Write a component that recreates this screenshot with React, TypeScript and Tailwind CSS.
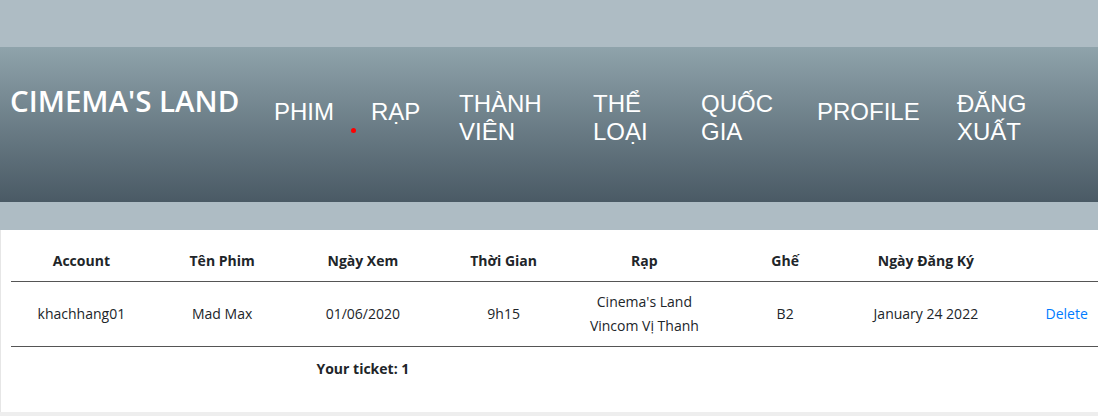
import React from "react";

const headers = ["Account", "Tên Phim", "Ngày Xem", "Thời Gian", "Rạp", "Ghế", "Ngày Đăng Ký", ""];

export default function App() {
  return (
    <div className="w-[1098px] h-[416px] overflow-hidden bg-[#eeeeee]">
      <div className="h-[47px] bg-[#aebcc4]" />
      <header className="relative h-[155px] bg-linear-to-b from-[#8fa3ab] to-[#4a5a65] flex items-start text-white">
        <div className="w-[274px] shrink-0 pl-[10px] mt-[35px] text-[29.5px] leading-[38px] font-semibold whitespace-nowrap [font-family:'Open_Sans',sans-serif]">
          CIMEMA'S LAND
        </div>
        <nav className="flex items-start text-[24px] leading-[28px] [font-family:'Liberation_Sans',Arial,sans-serif]">
          <div className="w-[97px] mt-[51px]">PHIM</div>
          <div className="w-[88px] mt-[51px]">RẠP</div>
          <div className="w-[134px] mt-[43px]"><div className="w-[90px]">THÀNH VIÊN</div></div>
          <div className="w-[108px] mt-[43px]"><div className="w-[60px]">THỂ LOẠI</div></div>
          <div className="w-[116px] mt-[43px]"><div className="w-[80px]">QUỐC GIA</div></div>
          <div className="w-[140px] mt-[51px]">PROFILE</div>
          <div className="w-[120px] mt-[43px]"><div className="w-[80px]">ĐĂNG XUẤT</div></div>
        </nav>
        <span className="absolute left-[351px] top-[81px] w-[5px] h-[5px] rounded-full bg-[#ff0000]" />
      </header>
      <div className="h-[28px] bg-[#aebcc4]" />
      <section className="h-[182px] bg-white border-l border-[#e6e6e6] text-[14px] text-[#212529] [font-family:'Open_Sans',sans-serif]">
        <div className="ml-[10px] w-[1126px]">
          <div className="grid grid-cols-8 h-[52px] pt-[21px] border-b border-[#555555] font-bold leading-[20px]">
            {headers.map((h, i) => (
              <div key={i} className="flex justify-center whitespace-nowrap">{h}</div>
            ))}
          </div>
          <div className="grid grid-cols-8 h-[65px] items-center border-b border-[#555555] leading-6">
            <div className="flex justify-center whitespace-nowrap">khachhang01</div>
            <div className="flex justify-center whitespace-nowrap">Mad Max</div>
            <div className="flex justify-center whitespace-nowrap">01/06/2020</div>
            <div className="flex justify-center whitespace-nowrap">9h15</div>
            <div className="flex flex-col items-center whitespace-nowrap">
              <span>Cinema's Land</span>
              <span>Vincom Vị Thanh</span>
            </div>
            <div className="flex justify-center whitespace-nowrap">B2</div>
            <div className="flex justify-center whitespace-nowrap">January 24 2022</div>
            <div className="flex justify-center whitespace-nowrap">
              <a className="text-[#007bff]">Delete</a>
            </div>
          </div>
          <div className="grid grid-cols-8 pt-[10px] leading-6 font-bold">
            <div />
            <div />
            <div className="flex justify-center whitespace-nowrap">Your ticket: 1</div>
          </div>
        </div>
      </section>
    </div>
  );
}
